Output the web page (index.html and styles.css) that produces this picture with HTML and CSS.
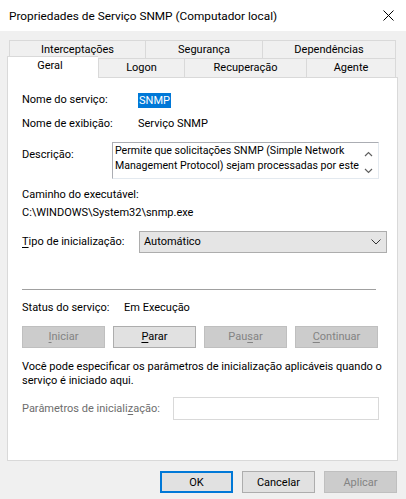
FILE: index.html
```html
<!DOCTYPE html>
<html lang="pt-BR">
<head>
<meta charset="utf-8">
<title>Propriedades de Serviço SNMP</title>
<link rel="stylesheet" href="styles.css">
</head>
<body>
<div class="window">
  <div class="titlebar">
    <span class="title">Propriedades de Serviço SNMP (Computador local)</span>
    <svg class="close" width="11" height="11" viewBox="0 0 11 11"><path d="M0.5 0.5 L10.5 10.5 M10.5 0.5 L0.5 10.5" stroke="#000" stroke-width="1" fill="none"/></svg>
  </div>
  <div class="dialog">
    <div class="tabs">
      <div class="tabrow back">
        <div class="tab t-int">Interceptações</div>
        <div class="tab t-seg">Segurança</div>
        <div class="tab t-dep last">Dependências</div>
      </div>
      <div class="tabrow front">
        <div class="tab t-ger active">Geral</div>
        <div class="tab t-log">Logon</div>
        <div class="tab t-rec">Recuperação</div>
        <div class="tab t-age last">Agente</div>
      </div>
    </div>
    <div class="panel">
      <div class="row r-name">
        <span class="label l116">Nome do serviço:</span>
        <span class="selected">SNMP</span>
      </div>
      <div class="row r-display">
        <span class="label l116">Nome de exibição:</span>
        <span>Serviço SNMP</span>
      </div>
      <div class="row r-desc">
        <span class="label l90 desc-label">Descrição:</span>
        <div class="textarea">
          <div class="ta-text">
            <div class="ta-line">Permite que solicitações SNMP (Simple Network</div>
            <div class="ta-line">Management Protocol) sejam processadas por este</div>
          </div>
          <div class="ta-scroll">
            <svg width="9" height="6" viewBox="0 0 9 6"><path d="M1 5 L4.5 1.5 L8 5" stroke="#606060" stroke-width="1.2" fill="none"/></svg>
            <svg width="9" height="6" viewBox="0 0 9 6"><path d="M1 1 L4.5 4.5 L8 1" stroke="#606060" stroke-width="1.2" fill="none"/></svg>
          </div>
        </div>
      </div>
      <div class="row r-path-label">Caminho do executável:</div>
      <div class="row r-path">C:\WINDOWS\System32\snmp.exe</div>
      <div class="row r-type">
        <span class="label l117"><u>T</u>ipo de inicialização:</span>
        <div class="select">
          <span>Automático</span>
          <svg width="10" height="6" viewBox="0 0 10 6"><path d="M0.5 0.5 L5 5 L9.5 0.5" stroke="#333" stroke-width="1" fill="none"/></svg>
        </div>
      </div>
      <div class="separator"></div>
      <div class="row r-status">
        <span class="label l102">Status do serviço:</span>
        <span>Em Execução</span>
      </div>
      <div class="row r-buttons">
        <div class="btn disabled"><u>I</u>niciar</div>
        <div class="btn"><u>P</u>arar</div>
        <div class="btn disabled">Pau<u>s</u>ar</div>
        <div class="btn disabled"><u>C</u>ontinuar</div>
      </div>
      <p class="note">Você pode especificar os parâmetros de inicialização aplicáveis quando o serviço é iniciado aqui.</p>
      <div class="row r-params">
        <span class="label l151 muted">Parâmetros de iniciali<u>z</u>ação:</span>
        <div class="input"></div>
      </div>
    </div>
    <div class="footer">
      <div class="btn fbtn default">OK</div>
      <div class="btn fbtn">Cancelar</div>
      <div class="btn fbtn disabled">Aplicar</div>
    </div>
  </div>
</div>
</body>
</html>
```
FILE: styles.css
```css
* { box-sizing: border-box; }
html, body { margin: 0; padding: 0; }
body {
  width: 406px;
  height: 499px;
  overflow: hidden;
  background: #f0f0f0;
  font-family: Roboto, "Liberation Sans", sans-serif;
  font-size: 11px;
  color: #000;
}
u { text-decoration: underline; text-underline-offset: 2px; }

.titlebar {
  height: 31px;
  background: #fff;
  display: flex;
  align-items: center;
  justify-content: space-between;
  padding: 0 12px 0 9px;
}
.title { font-size: 11.8px; }
.close { display: block; }

.dialog { padding: 9px 9px 0 7px; }

.tabs { width: 390px; }
.tabrow { display: flex; }
.tab {
  background: #f0f0f0;
  border: 1px solid #d9d9d9;
  border-right: none;
  border-bottom: none;
  display: flex;
  align-items: center;
  justify-content: center;
  line-height: 14px;
}
.tab.last { border-right: 1px solid #d9d9d9; }
.back { margin-left: 2px; height: 18px; }
.back .tab { height: 18px; }
.t-int { width: 136px; }
.t-seg { width: 117px; }
.t-dep { width: 134px; }

.front { height: 19px; align-items: flex-end; }
.front .tab { height: 19px; }
.t-ger { width: 91px; }
.t-log { width: 86px; }
.t-rec { width: 122px; }
.t-age { width: 90px; }
.tab.active {
  height: 22px;
  margin-bottom: -1px;
  background: #fff;
  border-right: none;
  position: relative;
  z-index: 1;
  align-items: flex-start;
  padding-top: 2px;
  padding-right: 6px;
}

.panel {
  width: 391px;
  height: 384px;
  background: #fff;
  border: 1px solid #d9d9d9;
  padding: 14px 0 0 14px;
}
.row { display: flex; align-items: center; line-height: 16px; }
.label { flex: none; }
.l90 { width: 90px; }
.l102 { width: 102px; }
.l116 { width: 116px; }
.l117 { width: 117px; }
.l151 { width: 151px; }

.selected {
  background: #0078d7;
  color: #fff;
  padding: 0 1px;
  line-height: 15px;
}
.r-display { margin-top: 8px; }

.r-desc { margin-top: 10px; align-items: flex-start; }
.desc-label { margin-top: 5px; }
.textarea {
  width: 267px;
  height: 37px;
  border: 1px solid #abadb3;
  border-right-color: #e3e9ef;
  border-bottom-color: #e3e9ef;
  display: flex;
}
.ta-text {
  flex: 1;
  padding: 0 0 0 2px;
  line-height: 15px;
  font-size: 10.6px;
  white-space: nowrap;
}
.ta-scroll {
  width: 17px;
  display: flex;
  flex-direction: column;
  justify-content: space-between;
  align-items: center;
  padding: 8px 2px 4px 0;
}
.ta-scroll svg { display: block; }

.r-path-label { margin-top: 8px; }
.r-path { margin-top: 2px; }

.r-type { margin-top: 10px; }
.select {
  width: 248px;
  height: 22px;
  background: #e5e5e5;
  border: 1px solid #adadad;
  display: flex;
  align-items: center;
  justify-content: space-between;
  padding: 0 5px 0 4px;
}

.separator {
  width: 354px;
  height: 1px;
  background: #a0a0a0;
  margin-top: 36px;
}
.r-status { margin-top: 10px; }

.r-buttons {
  margin-top: 10px;
  width: 356px;
  justify-content: space-between;
}
.btn {
  height: 22px;
  width: 83px;
  background: #e1e1e1;
  border: 1px solid #adadad;
  display: flex;
  align-items: center;
  justify-content: center;
}
.btn.disabled {
  background: #cccccc;
  border-color: #bfbfbf;
  color: #838383;
}

.note {
  margin: 12px 0 0 0;
  width: 362px;
  line-height: 14px;
}
.r-params { margin-top: 9px; }
.muted { color: #6d6d6d; }
.input {
  width: 206px;
  height: 23px;
  border: 1px solid #d9d9d9;
  background: #fff;
}

.footer {
  display: flex;
  justify-content: flex-end;
  gap: 9px;
  margin-top: 10px;
  width: 390px;
}
.fbtn { width: 73px; }
.fbtn.default { border: 2px solid #0078d7; }
```
